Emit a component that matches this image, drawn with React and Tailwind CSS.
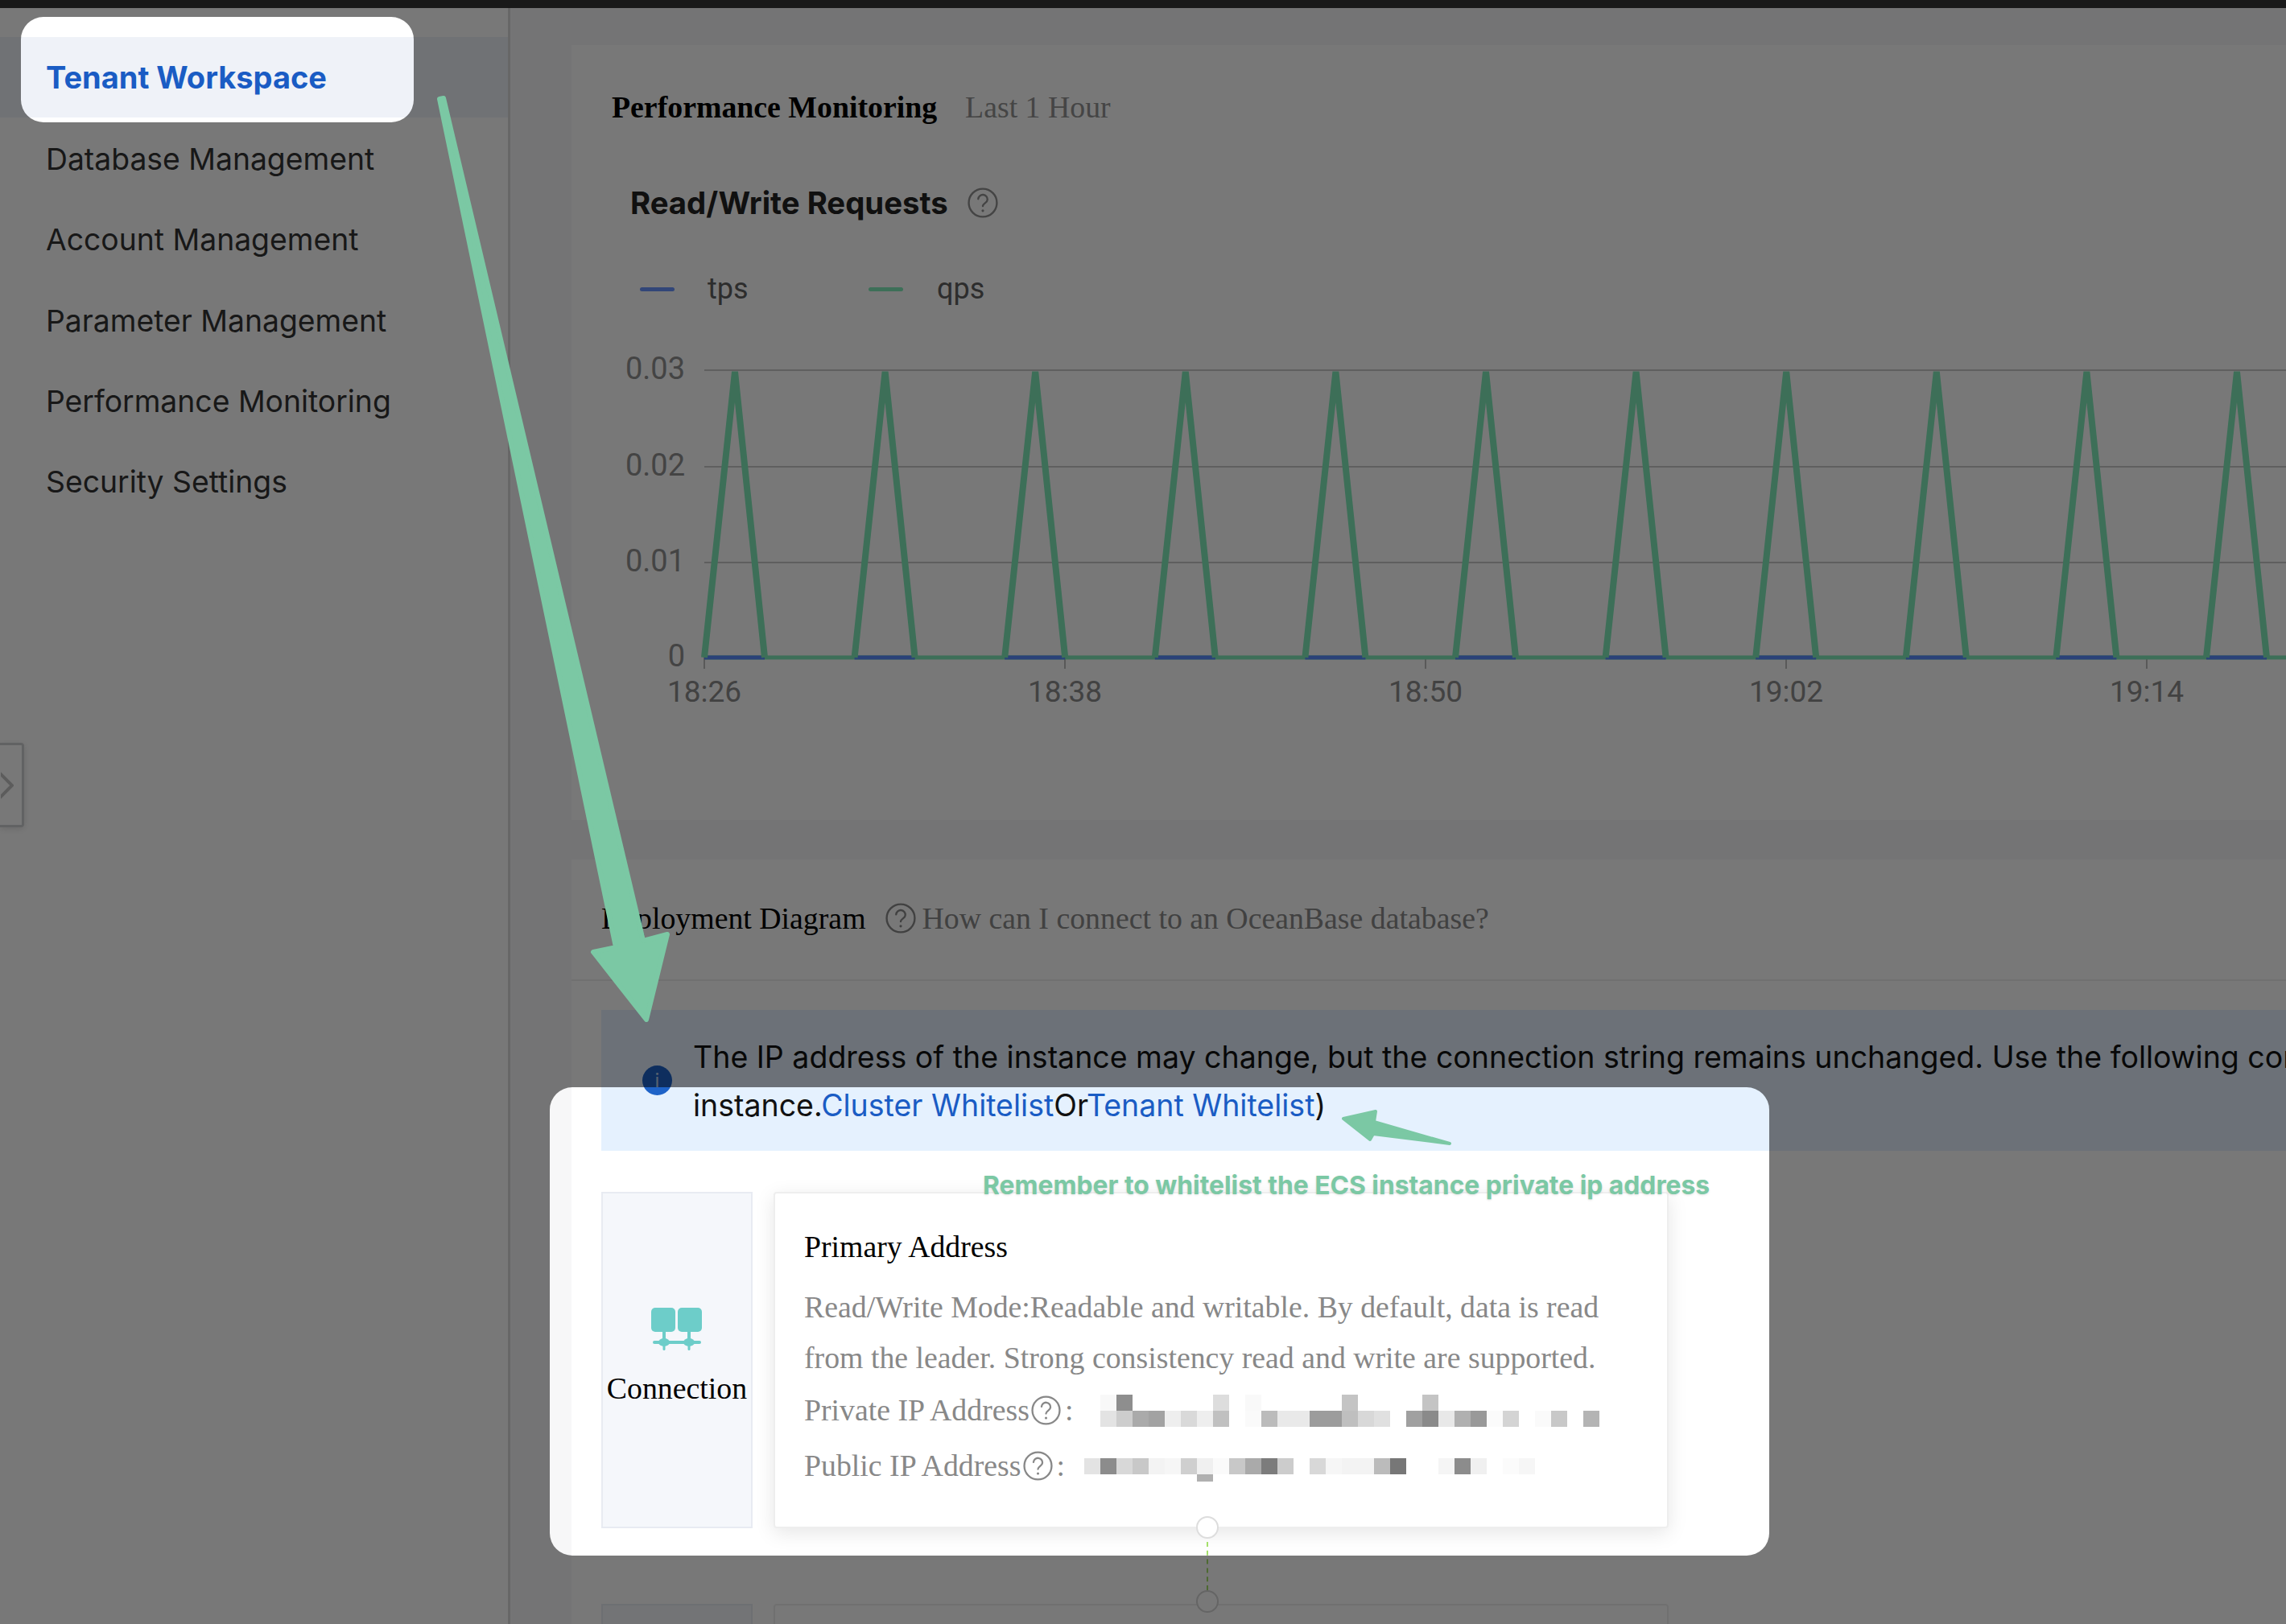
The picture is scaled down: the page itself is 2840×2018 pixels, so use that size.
const menu = ['Tenant Workspace', 'Database Management', 'Account Management', 'Parameter Management', 'Performance Monitoring', 'Security Settings'];

const ySteps = [
  { label: '0.03', y: 404 },
  { label: '0.02', y: 524 },
  { label: '0.01', y: 643 },
  { label: '0', y: 761 },
];
const xTicks = ['18:26', '18:38', '18:50', '19:02', '19:14'];
const spikes = Array.from({ length: 11 }, (_, i) => i);

const privateTop = [248, 142, 255, 255, 255, 255, 255, 221, 255, 249, 255, 255, 255, 255, 255, 196, 255, 255, 255, 255, 196];
const privateBottom = [227, 205, 170, 162, 238, 217, 238, 192, 255, 250, 187, 233, 233, 156, 156, 191, 216, 224, 255, 160, 138, 232, 176, 153, 251, 212, 255, 250, 200, 255, 180];
const publicRow = [227, 140, 216, 200, 243, 246, 207, 240, 250, 200, 170, 124, 204, 255, 216, 246, 243, 243, 187, 119, 255, 255, 245, 140, 240, 255, 251, 246];

function HelpIcon({ className }) {
  return (
    <svg viewBox="0 0 24 24" fill="none" stroke="currentColor" strokeWidth="1.5" strokeLinecap="round" className={className}>
      <circle cx="12" cy="12" r="11" />
      <path d="M8.4 9a3.6 3.6 0 0 1 7.2 .6c0 2.4-3.6 2.8-3.6 5" />
      <path d="M12 18.2h.01" strokeWidth="2" />
    </svg>
  );
}

function Mosaic({ row }) {
  return (
    <div className="flex h-[20px]">
      {row.map((v, i) => (
        <div key={i} className="w-[20px] h-[20px]" style={{ backgroundColor: `rgb(${v},${v},${v})` }} />
      ))}
    </div>
  );
}

function ConnectionIcon() {
  return (
    <svg width="64" height="53" viewBox="0 0 64 53" fill="#6dcdc9">
      <rect x="0" y="0" width="30" height="30" rx="5" />
      <rect x="33" y="0" width="30" height="30" rx="5" />
      <rect x="14" y="28" width="4" height="16" />
      <rect x="45" y="28" width="4" height="16" />
      <rect x="2" y="41" width="60" height="4" rx="2" />
      <ellipse cx="16" cy="43" rx="7" ry="5" />
      <ellipse cx="47" cy="43" rx="7" ry="5" />
      <rect x="14.5" y="43" width="3" height="10" rx="1.5" />
      <rect x="45.5" y="43" width="3" height="10" rx="1.5" />
    </svg>
  );
}

function Chart() {
  return (
    <svg width="2130" height="880" viewBox="0 0 2130 880" className="block" fontFamily="Roboto, sans-serif">
      {ySteps.map((s) => (
        <g key={s.label}>
          <line x1="165" x2="2130" y1={s.y} y2={s.y} stroke="#cbcbcb" strokeWidth="2" />
          <text x="141" y={s.y + 11} textAnchor="end" fontSize="38" fill="#909090">{s.label}</text>
        </g>
      ))}
      {xTicks.map((t, i) => (
        <g key={t}>
          <line x1={165 + i * 448} x2={165 + i * 448} y1="761" y2="775" stroke="#bdbdbd" strokeWidth="2" />
          <text x={165 + i * 448} y="816" textAnchor="middle" fontSize="37" fill="#8c8c8c">{t}</text>
        </g>
      ))}
      <line x1="165" x2="2130" y1="761" y2="761" stroke="#82ecbb" strokeWidth="5" />
      {spikes.map((i) => (
        <line key={i} x1={165 + i * 186.6} x2={240 + i * 186.6} y1="761" y2="761" stroke="#5a8cff" strokeWidth="5" />
      ))}
      {spikes.map((i) => (
        <polyline
          key={i}
          points={`${165 + i * 186.6},761 ${203 + i * 186.6},406 ${240 + i * 186.6},761`}
          fill="none"
          stroke="#82ecbb"
          strokeWidth="8"
          strokeLinejoin="bevel"
        />
      ))}
    </svg>
  );
}

function EmptyRow() {
  return (
    <div className="flex gap-[26px]">
      <div className="w-[188px] h-[416px] shrink-0 bg-[#f5f7fb] border-2 border-[#e8ebf2]" />
      <div className="w-[1112px] h-[416px] shrink-0 rounded-[4px] bg-white border-2 border-[#eeeeee]" />
    </div>
  );
}

function PrimaryRow() {
  return (
    <div className="flex gap-[26px]">
      <div className="w-[188px] h-[418px] shrink-0 flex flex-col items-center bg-[#f5f7fb] border-2 border-[#e8ebf2] pt-[142px]">
        <ConnectionIcon />
        <div className="mt-[25px] text-[37.8px] leading-[44px] text-black">Connection</div>
      </div>
      <div className="w-[1112px] h-[418px] shrink-0 rounded-[4px] bg-white border-2 border-[#eeeeee] shadow-[0_6px_24px_rgba(0,0,0,0.1)] pl-[36px] pt-[44px] text-[37.8px] text-[#888888]">
        <div className="leading-[44px] text-black">Primary Address</div>
        <div className="mt-[22px] w-[1040px] leading-[63px]">
          Read/Write Mode:Readable and writable. By default, data is read from the leader. Strong consistency read and write are supported.
        </div>
        <div className="mt-[1px] flex items-center h-[65px]">
          <span>Private IP Address</span>
          <HelpIcon className="w-[37px] h-[37px] ml-[2px]" />
          <span className="ml-[5px]">:</span>
          <div className="ml-[34px]">
            <Mosaic row={privateTop} />
            <Mosaic row={privateBottom} />
          </div>
        </div>
        <div className="mt-[4px] flex items-center h-[65px]">
          <span>Public IP Address</span>
          <HelpIcon className="w-[37px] h-[37px] ml-[2px]" />
          <span className="ml-[5px]">:</span>
          <div className="ml-[24px] relative">
            <Mosaic row={publicRow} />
            <div className="absolute left-[140px] top-[20px] w-[20px] h-[9px] bg-[#b0b0b0]" />
          </div>
        </div>
      </div>
    </div>
  );
}

export default function App() {
  return (
    <div className="relative w-[2840px] h-[2018px] overflow-hidden bg-[#f7f7f8] font-['Liberation_Serif',serif]">
      <div className="h-[10px] bg-[#353535]" />

      <div className="flex h-[2008px]">
        {/* sidebar */}
        <aside className="relative w-[634px] shrink-0 bg-white border-r-[3px] border-[#dcdcdc] pt-[36px] font-['Inter',sans-serif]">
          {menu.map((item, i) => (
            <div
              key={item}
              className={
                i === 0
                  ? 'h-[100px] pl-[57px] pt-[1px] flex items-center text-[38px] font-bold text-[#1a5cc4] bg-[#eff2f8]'
                  : 'h-[100.4px] pl-[57px] pt-[3px] flex items-center text-[37.3px] text-[#333333]'
              }
            >
              {item}
            </div>
          ))}
          <div className="absolute left-0 top-[913px] w-[30px] h-[105px] bg-white rounded-r-[4px] border-[3px] border-l-0 border-[#cfd0d2] shadow-[0_2px_8px_rgba(0,0,0,0.12)] flex items-center justify-end">
            <svg width="16" height="36" viewBox="0 0 16 36" fill="none" stroke="#c4c4c4" strokeWidth="4" className="mr-[10px]">
              <path d="M-2 2 L14 18 L-2 34" />
            </svg>
          </div>
        </aside>

        {/* main */}
        <main className="flex-1 min-w-0 pl-[76px] pt-[46px] flex flex-col gap-[49px]">
          <section className="relative h-[963px] shrink-0 bg-white">
            <div className="absolute left-[50px] top-[52px] flex items-center gap-[35px] text-[37.8px] leading-[50px]">
              <span className="font-bold text-black">Performance Monitoring</span>
              <span className="text-[#929292]">Last 1 Hour</span>
            </div>
            <div className="absolute left-[73px] top-[171px] flex items-center gap-[24px] font-['Inter',sans-serif] text-[38.3px] leading-[50px] font-bold text-[#222222]">
              <span>Read/Write Requests</span>
              <HelpIcon className="w-[38px] h-[38px] text-[#909090]" />
            </div>
            <div className="absolute left-[85px] top-[278px] flex items-center text-[36px] leading-[50px] text-[#606060] font-['Roboto',sans-serif]">
              <span className="w-[43px] h-[5px] rounded-full bg-[#6a96ff]" />
              <span className="ml-[41px] w-[200px]">tps</span>
              <span className="w-[43px] h-[5px] rounded-full bg-[#82ecbb]" />
              <span className="ml-[42px]">qps</span>
            </div>
            <div className="absolute left-0 top-0">
              <Chart />
            </div>
          </section>

          <section className="flex-1 bg-white">
            <div className="h-[151px] pb-[3px] border-b-2 border-[#ededed] pl-[37px] flex items-center text-[37.8px]">
              <span className="text-black">Deployment Diagram</span>
              <HelpIcon className="w-[38px] h-[38px] ml-[24px] text-[#8a8a8a]" />
              <span className="ml-[8px] text-[#8a8a8a]">How can I connect to an OceanBase database?</span>
            </div>
            <div className="pl-[37px] pt-[36px]">
              <div className="h-[175px] bg-[#e5f1fe] flex items-center pl-[51px] font-['Inter',sans-serif] text-[37.5px] leading-[60px] text-[#111111] whitespace-nowrap">
                <span className="w-[37px] h-[37px] shrink-0 rounded-full bg-[#1e63c8] flex items-center justify-center text-[24px] leading-none text-white/70">i</span>
                <div className="ml-[26px] pt-[2px]">
                  <div>The IP address of the instance may change, but the connection string remains unchanged. Use the following connection string to connect to the</div>
                  <div>
                    instance.<span className="text-[#1a5cc4]">Cluster Whitelist</span>Or<span className="text-[#1a5cc4]">Tenant Whitelist</span>)
                  </div>
                </div>
              </div>
              <div className="mt-[51px]">
                <PrimaryRow />
              </div>
              {/* connector between the two rows */}
              <div className="-mt-[15px] ml-[739px] w-[28px] h-[109px] flex flex-col items-center relative">
                <span className="w-[28px] h-[28px] shrink-0 rounded-full bg-white border-2 border-[#dddddd]" />
                <span className="mt-[4px] h-[60px] shrink-0 border-l-2 border-dashed border-[#a5e06a]" />
                <span className="w-[28px] h-[28px] shrink-0 rounded-full bg-white border-2 border-[#d6d6d6]" />
              </div>
              <EmptyRow />
            </div>
          </section>
        </main>
      </div>

      {/* dimming layer with two spotlight holes */}
      <svg className="absolute inset-0 z-20 pointer-events-none" width="2840" height="2018" viewBox="0 0 2840 2018">
        <path
          fillRule="evenodd"
          fill="rgba(0,0,0,0.53)"
          d="M0 0H2840V2018H0Z
             M54 21H486a28 28 0 0 1 28 28V124a28 28 0 0 1 -28 28H54a28 28 0 0 1 -28 -28V49a28 28 0 0 1 28 -28Z
             M711 1351H2170a28 28 0 0 1 28 28V1905a28 28 0 0 1 -28 28H711a28 28 0 0 1 -28 -28V1379a28 28 0 0 1 28 -28Z"
        />
      </svg>

      {/* annotations */}
      <svg className="absolute inset-0 z-30 pointer-events-none" width="2840" height="2018" viewBox="0 0 2840 2018" fill="#7bc8a4" stroke="#7bc8a4" strokeWidth="6" strokeLinejoin="round">
        <polygon points="546,123 551,122 799,1169 829,1161 803,1267 737,1183 765,1177" />
        <polygon points="1669,1390 1709,1381 1707,1394 1801,1421 1706,1409 1702,1416" strokeWidth="4" />
      </svg>
      <div className="absolute z-30 left-[1221px] top-[1452px] font-['Inter',sans-serif] text-[31.8px] leading-[42px] font-bold text-[#7bc8a4] whitespace-nowrap [text-shadow:0_1px_3px_rgba(0,0,0,0.12)]">
        Remember to whitelist the ECS instance private ip address
      </div>
    </div>
  );
}
